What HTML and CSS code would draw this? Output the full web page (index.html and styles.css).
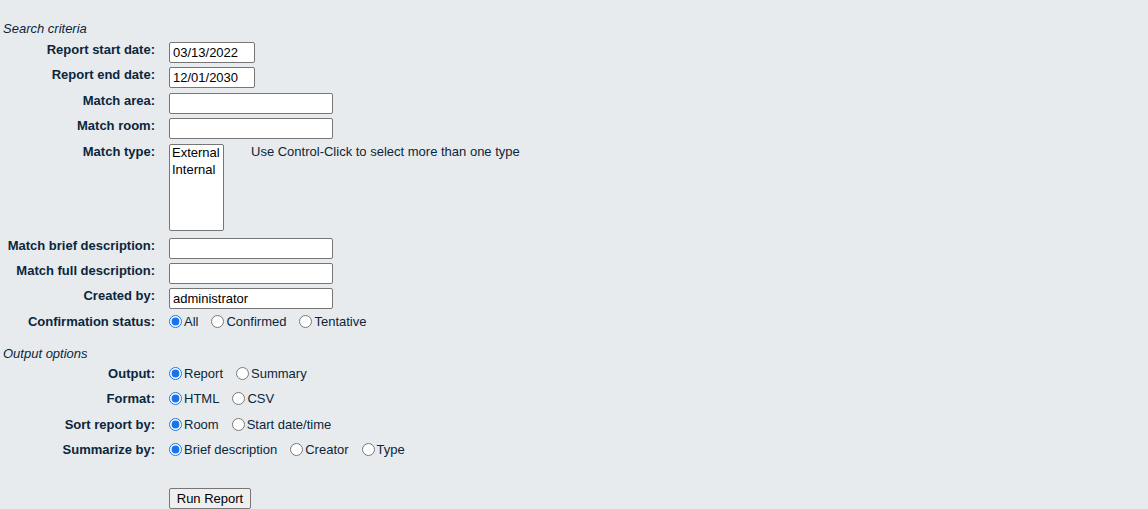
FILE: index.html
```html
<!DOCTYPE html>
<html>
<head>
<meta charset="utf-8">
<link rel="stylesheet" href="styles.css">
</head>
<body>
<form class="report-form">
  <fieldset class="group">
    <legend class="legend">Search criteria</legend>
    <div class="rows rows-search">
      <div class="row">
        <label class="label">Report start date:</label>
        <input class="field date" type="text" value="03/13/2022">
      </div>
      <div class="row">
        <label class="label">Report end date:</label>
        <input class="field date" type="text" value="12/01/2030">
      </div>
      <div class="row">
        <label class="label">Match area:</label>
        <input class="field text" type="text">
      </div>
      <div class="row">
        <label class="label">Match room:</label>
        <input class="field text" type="text">
      </div>
      <div class="row">
        <label class="label">Match type:</label>
        <div class="listbox">
          <div class="option">External</div>
          <div class="option">Internal</div>
        </div>
        <span class="note">Use Control-Click to select more than one type</span>
      </div>
      <div class="row">
        <label class="label">Match brief description:</label>
        <input class="field text" type="text">
      </div>
      <div class="row">
        <label class="label">Match full description:</label>
        <input class="field text" type="text">
      </div>
      <div class="row">
        <label class="label">Created by:</label>
        <input class="field text" type="text" value="administrator">
      </div>
      <div class="row row-radio">
        <label class="label">Confirmation status:</label>
        <div class="radios">
          <label class="opt"><input type="radio" name="conf" checked>All</label>
          <label class="opt"><input type="radio" name="conf">Confirmed</label>
          <label class="opt"><input type="radio" name="conf">Tentative</label>
        </div>
      </div>
    </div>
  </fieldset>
  <fieldset class="group group-output">
    <legend class="legend">Output options</legend>
    <div class="rows rows-output">
      <div class="row row-radio">
        <label class="label">Output:</label>
        <div class="radios">
          <label class="opt"><input type="radio" name="out" checked>Report</label>
          <label class="opt"><input type="radio" name="out">Summary</label>
        </div>
      </div>
      <div class="row row-radio">
        <label class="label">Format:</label>
        <div class="radios">
          <label class="opt"><input type="radio" name="fmt" checked>HTML</label>
          <label class="opt"><input type="radio" name="fmt">CSV</label>
        </div>
      </div>
      <div class="row row-radio">
        <label class="label">Sort report by:</label>
        <div class="radios">
          <label class="opt"><input type="radio" name="sort" checked>Room</label>
          <label class="opt"><input type="radio" name="sort">Start date/time</label>
        </div>
      </div>
      <div class="row row-radio">
        <label class="label">Summarize by:</label>
        <div class="radios">
          <label class="opt"><input type="radio" name="sum" checked>Brief description</label>
          <label class="opt"><input type="radio" name="sum">Creator</label>
          <label class="opt"><input type="radio" name="sum">Type</label>
        </div>
      </div>
    </div>
  </fieldset>
  <div class="submit-row">
    <button class="btn" type="button">Run Report</button>
  </div>
</form>
</body>
</html>
```
FILE: styles.css
```css
html, body {
  margin: 0;
  padding: 0;
  background: #e7ebee;
}
body {
  font-family: "Liberation Sans", Arial, sans-serif;
  font-size: 13px;
  color: #0b263b;
}
.report-form {
  padding-top: 21px;
}
.group {
  border: 0;
  margin: 0;
  padding: 0;
  min-width: 0;
}
.legend {
  display: block;
  float: none;
  padding: 0 0 0 3px;
  margin: 0;
  font-style: italic;
  font-size: 13px;
  line-height: 15px;
  color: #0b263b;
}
.rows {
  display: grid;
}
.rows-search {
  margin-top: 5px;
  grid-template-rows: 25px 26px 25px 26px 94px 25px 25px 25px 25px;
}
.rows-output {
  margin-top: 3px;
  grid-template-rows: 25px 26px 25px 25px;
}
.row {
  display: flex;
  align-items: flex-start;
}
.label {
  width: 155px;
  flex: none;
  text-align: right;
  font-weight: bold;
  line-height: 15px;
  margin-top: 1px;
  margin-right: 14px;
}
.field {
  box-sizing: border-box;
  height: 21px;
  margin: 1px 0 0 0;
  padding: 1px 3px;
  border: 1px solid #767676;
  border-radius: 2px;
  background: #fff;
  font-family: "Liberation Sans", Arial, sans-serif;
  font-size: 13px;
  color: #000;
}
.date { width: 86px; }
.text { width: 164px; }
.listbox {
  box-sizing: border-box;
  width: 55px;
  height: 87px;
  margin-top: 1px;
  border: 1px solid #767676;
  border-radius: 2px;
  background: #fff;
  padding: 0 2px;
  color: #000;
}
.option {
  line-height: 15px;
  margin-bottom: 2px;
}
.note {
  margin-left: 27px;
  margin-top: 1px;
  line-height: 15px;
  color: #0b263b;
}
.row-radio .label {
  margin-top: 2px;
}
.radios {
  display: flex;
  align-items: center;
  margin-top: 2px;
  gap: 13px;
}
.opt {
  display: flex;
  align-items: center;
  line-height: 15px;
  color: #0b263b;
}
.opt input {
  margin: 0 2px 0 0;
  width: 13px;
  height: 13px;
  accent-color: #1a73e8;
}
.group-output {
  margin-top: 9px;
}
.submit-row {
  padding-left: 169px;
  margin-top: 23px;
}
.btn {
  box-sizing: border-box;
  height: 21px;
  width: 82px;
  padding: 0 6px;
  font-family: "Liberation Sans", Arial, sans-serif;
  font-size: 13px;
  color: #000;
  background: #efefef;
  border: 1px solid #767676;
  border-radius: 2px;
}
```
